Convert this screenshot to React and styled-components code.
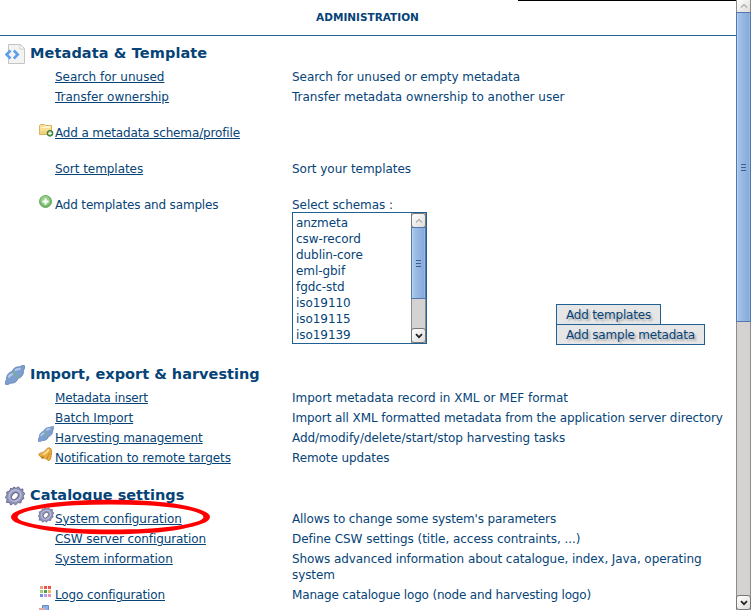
import React from "react";
import styled, { createGlobalStyle, css } from "styled-components";

const Global = createGlobalStyle`
  * { box-sizing: border-box; }
  html, body { margin: 0; padding: 0; overflow: hidden; background: #fff; }
`;

const Page = styled.div`
  display: flex;
  width: 752px;
  height: 610px;
  overflow: hidden;
  position: relative;
  color: #064377;
  font: 12px/16px "DejaVu Sans", sans-serif;
`;

const Content = styled.main`
  width: 736px;
  height: 610px;
  overflow: hidden;
`;

const TopEdge = styled.div`
  height: 1px;
  margin-left: 518px;
  background: #000;
`;

const Header = styled.header`
  height: 35px;
  padding: 8px 1px 0 0;
  border-bottom: 1px solid #1f6095;
  text-align: center;
  font-size: 10.5px;
  font-weight: bold;
`;

const Title = styled.span`
  display: inline-block;
  white-space: nowrap;
  letter-spacing: ${(p) => p.$ls || 0}px;
`;

const Section = styled.section`
  margin-top: ${(p) => p.$top}px;
`;

const Heading = styled.h2`
  display: flex;
  align-items: center;
  gap: 5px;
  height: 22px;
  margin: 0 0 3px;
  padding-left: 5px;
  font-size: 14.5px;
  line-height: 20px;
  svg { flex: none; width: 20px; height: 20px; margin-top: 2px; }
`;

const Row = styled.div`
  display: grid;
  grid-template-columns: 38px 17px 237px 444px;
  min-height: 20px;
  margin-bottom: ${(p) => p.$gap || 0}px;
  padding-top: 2px;
`;

const IconCell = styled.span`
  height: 16px;
  margin-top: ${(p) => p.$top ?? -3}px;
  svg { display: block; width: 16px; height: 16px; }
`;

const Text = styled.span`
  white-space: nowrap;
  letter-spacing: ${(p) => p.$ls || 0}px;
`;

const Link = styled(Text).attrs({ as: "a" })`
  text-decoration: underline;
  text-decoration-thickness: 1px;
  text-underline-offset: 1px;
`;

const SchemaPicker = styled.div`
  display: grid;
  grid-template-columns: 264px auto;
  margin-top: -1px;
`;

const ListBox = styled.div`
  display: flex;
  justify-content: space-between;
  width: 135px;
  height: 132px;
  border: 1px solid #1f6095;
`;

const Options = styled.ul`
  list-style: none;
  margin: 0;
  padding: 2px 0 0 3px;
`;

const Buttons = styled.div`
  display: flex;
  flex-direction: column;
  align-items: flex-start;
  justify-content: flex-end;
  margin-bottom: -1px;
`;

const Button = styled.button`
  height: 21px;
  width: ${(p) => p.$w}px;
  padding: 2px 0 0;
  & + & { margin-top: -1px; }
  border: 1px solid #1f6095;
  background: #e6e6e6;
  color: #064377;
  font: 12px/17px "DejaVu Sans", sans-serif;
  letter-spacing: -0.2px;
  text-shadow: 2px 2px 2px #aaa;
  white-space: nowrap;
`;

const Track = styled.div`
  display: flex;
  flex-direction: column;
  width: ${(p) => p.$w}px;
  height: ${(p) => p.$h}px;
  background: #d5d3d1;
  border-left: 1px solid #8e8c8a;
  border-right: 1px solid #8e8c8a;
`;

const Arrow = styled.div`
  display: grid;
  flex: none;
  place-items: center;
  height: ${(p) => p.$h}px;
  background: linear-gradient(135deg, #fff, #dedcda);
  ${(p) =>
    p.$boxed &&
    css`
      margin: 0 -1px;
      border: 1px solid #777;
      border-radius: 3px;
    `}
  ${(p) => p.$down && css`margin-top: auto;`}
`;

const Thumb = styled.div`
  display: grid;
  flex: none;
  place-items: center;
  height: ${(p) => p.$h}px;
  margin: ${(p) => p.$up || 0}px -1px 0;
  border: 1px solid #5078ae;
  box-shadow: inset 1px 0 #b9d2f1, inset -1px 0 #9bb8e2;
  background: linear-gradient(90deg, #a9c6ea, #94b6e1 48%, #84a8d9);
`;

const Annotation = styled.svg`
  position: absolute;
  left: 8px;
  top: 496px;
`;

const Chevron = ({ down }) => (
  <svg width="8" height="6" viewBox="0 0 8 6" fill="none">
    <path
      d={down ? "M1 1.2L4 4.2L7 1.2" : "M1 4.5L4 1.5L7 4.5"}
      stroke={down ? "#222" : "#aaa"}
      strokeWidth={down ? 1.7 : 1.1}
    />
  </svg>
);

const Grip = () => (
  <svg width="5" height="7" viewBox="0 0 5 7" fill="#3b5f93">
    <path d="M0 0h5v1H0zM0 3h5v1H0zM0 6h5v1H0z" />
  </svg>
);

const CodePageIcon = () => (
  <svg viewBox="0 0 20 20" fill="none">
    <path d="M3.500 .5H15.500L19.500 4.500V19.500H3.500Z" fill="#f3f3f3" stroke="#c4c4c4" />
    <path d="M15 1v4H19" fill="#fff" stroke="#cfcfcf" />
    <path d="M5.500 6.500L1.500 10.500L5.500 14.500M8.800 6.500L12.800 10.500L8.800 14.500" stroke="#5b9fe8" strokeWidth="2.500" />
  </svg>
);

const FolderAddIcon = () => (
  <svg viewBox="0 0 16 16">
    <path d="M1.500 2.500L2.500 1.500H6.500L7.500 2.500H13.500V11.500H1.500Z" fill="#f8df94" stroke="#dcb35c" />
    <path d="M3 4.500h9M6 3.500h6" stroke="#fff5cf" />
    <path d="M2 8h8v3H2z" fill="#f2d182" />
    <circle cx="12" cy="10.300" r="2.900" fill="#5da44c" stroke="#39772e" />
    <path d="M10.200 10.300h3.600M12 8.500v3.600" stroke="#fff" strokeWidth="1.200" />
  </svg>
);

const AddIcon = () => (
  <svg viewBox="0 0 16 16">
    <circle cx="7.500" cy="7.500" r="6" fill="#71b765" stroke="#6aa861" />
    <circle cx="7.300" cy="6.800" r="4.700" fill="#97cf8b" />
    <path d="M4.500 7.500h6M7.500 4.500v6" stroke="#fff" strokeWidth="2" />
  </svg>
);

const PlugIcon = () => (
  <svg viewBox="0 0 20 20">
    <path d="M.6 19.400C-.2 17 .5 15.500 1.600 14.500C1.200 10.500 3.500 7.500 7 6.600C8 3.500 11 1.500 14.800 1.800C16 .8 17.800 .2 19.400 .6C20 2.500 19.500 4.300 18.400 5.500C18.800 9.500 16.500 12.500 13.200 13.300C12 16.800 9 18.500 5.300 18.200C4 19.200 2.300 19.900 .6 19.400Z" fill="#7d9fd0" stroke="#5a7cb0" strokeWidth=".8" />
    <path d="M3.500 12.500Q5 9.500 8 9M10 5.500Q12.500 3.500 15.500 4" fill="none" stroke="#b3c9e9" strokeWidth="2.200" />
    <path d="M8.500 7L13 13" fill="none" stroke="#7db867" strokeWidth="1.200" />
  </svg>
);

const BellIcon = () => (
  <svg viewBox="0 0 16 16">
    <path d="M11.500 .8C14 1.500 13.800 5 13.300 8.300Q13 12.700 11 13.700C9.500 13 8.500 11.800 6.500 11.300C4.500 10.700 1 9.500 .8 7.500C.9 6 3.500 6 5.800 4.900C8 3.600 8.500 .5 11.500 .8Z" fill="#e9ad3f" stroke="#c08324" strokeWidth=".8" />
    <path d="M5 7.500Q9 6 10.800 2.500" fill="none" stroke="#ffe39b" strokeWidth="1.700" />
    <path d="M9 12Q10 8 12 6" fill="none" stroke="#c7841f" />
    <circle cx="4.500" cy="10.500" r="1.300" fill="#b87920" />
  </svg>
);

const GearIcon = () => (
  <svg viewBox="0 0 20 20">
    <path d="M8.500 1L11 2.300L13.500 .8L15 3.300L18 3L17.700 6L20 7.500L18 10L19 12.500L16.500 14L15.800 17L13 16.500L10.500 19L8.500 17.300L5.500 19L4.500 16.500L1.500 16.500L2 13.500L.3 11.500L2 9L1.700 6L4.700 5L5.500 2.300L8 3Z" fill="#8f94b8" stroke="#62668a" strokeWidth=".9" />
    <ellipse cx="10.200" cy="9.700" rx="6" ry="5.300" fill="none" stroke="#b7bbd6" strokeWidth="1.600" transform="rotate(-30 10 10)" />
    <ellipse cx="9.800" cy="10" rx="4" ry="2.800" fill="#fff" stroke="#666a8c" strokeWidth="1.100" transform="rotate(-50 10 10)" />
  </svg>
);

const PaletteIcon = () => (
  <svg viewBox="0 0 16 16">
    {["#f0a080", "#ee5145", "#e9554a", "#a6cf7c", "#4f9f50", "#f0b55e", "#6d8fdd", "#c29be0", "#e690bd"].map((c, i) => (
      <rect key={i} x={2 + (i % 3) * 4} y={1 + Math.floor(i / 3) * 4} width="3" height="3" fill={c} />
    ))}
  </svg>
);

const WindowsIcon = () => (
  <svg viewBox="0 0 16 16">
    <path d="M4.500 1.500h6v7h-6z" fill="#8bb1e4" stroke="#5e8ccc" />
    <path d="M1 4h6v8h-6z" fill="#e0a8a8" />
  </svg>
);

const Item = ({ icon, iconTop, label, ls, desc, dls, gap, plain }) => (
  <Row $gap={gap}>
    <i />
    <IconCell $top={iconTop}>{icon}</IconCell>
    {plain ? <Text $ls={ls}>{label}</Text> : <div><Link $ls={ls}>{label}</Link></div>}
    <Text $ls={dls}>{desc}</Text>
  </Row>
);

const schemas = ["anzmeta", "csw-record", "dublin-core", "eml-gbif", "fgdc-std", "iso19110", "iso19115", "iso19139"];

export default function App() {
  return (
    <Page>
      <Global />
      <Content>
        <TopEdge />
        <Header><Title>ADMINISTRATION</Title></Header>
        <Section $top={6}>
          <Heading><CodePageIcon /><Title $ls={0.1}>Metadata &amp; Template</Title></Heading>
          <Item label="Search for unused" desc="Search for unused or empty metadata" dls={-0.05} />
          <Item label="Transfer ownership" desc="Transfer metadata ownership to another user" gap={16} />
          <Item icon={<FolderAddIcon />} iconTop={-2} label="Add a metadata schema/profile" ls={-0.14} gap={16} />
          <Item label="Sort templates" ls={-0.05} desc="Sort your templates" dls={-0.03} gap={16} />
          <Item
            plain
            icon={<AddIcon />}
            label="Add templates and samples"
            ls={-0.17}
            dls={-0.06}
            desc={
              <>
                Select schemas :
                <SchemaPicker>
                  <ListBox>
                    <Options>{schemas.map((s) => <li key={s}>{s}</li>)}</Options>
                    <Track $w={15} $h={130}>
                      <Arrow $h={15} $boxed><Chevron /></Arrow>
                      <Thumb $h={72} $up={-1}><Grip /></Thumb>
                      <Arrow $h={15} $boxed $down><Chevron down /></Arrow>
                    </Track>
                  </ListBox>
                  <Buttons>
                    <Button $w={105}>Add templates</Button>
                    <Button $w={149}>Add sample metadata</Button>
                  </Buttons>
                </SchemaPicker>
              </>
            }
          />
        </Section>
        <Section $top={19}>
          <Heading><PlugIcon /><Title>Import, export &amp; harvesting</Title></Heading>
          <Item label="Metadata insert" ls={-0.13} desc="Import metadata record in XML or MEF format" dls={-0.01} />
          <Item label="Batch Import" desc="Import all XML formatted metadata from the application server directory" dls={-0.085} />
          <Item icon={<PlugIcon />} iconTop={-4} label="Harvesting management" ls={-0.09} desc="Add/modify/delete/start/stop harvesting tasks" dls={-0.045} />
          <Item icon={<BellIcon />} label="Notification to remote targets" ls={-0.08} desc="Remote updates" dls={-0.09} />
        </Section>
        <Section $top={16}>
          <Heading><GearIcon /><Title>Catalogue settings</Title></Heading>
          <Item icon={<GearIcon />} iconTop={-4} label="System configuration" ls={-0.07} desc="Allows to change some system's parameters" dls={-0.115} />
          <Item label="CSW server configuration" ls={-0.09} desc="Define CSW settings (title, access contraints, ...)" dls={-0.04} />
          <Item label="System information" desc={<>Shows advanced information about catalogue, index, Java, operating<br />system</>} dls={-0.077} gap={2} />
          <Item icon={<PaletteIcon />} iconTop={-2} label="Logo configuration" ls={-0.12} desc="Manage catalogue logo (node and harvesting logo)" dls={-0.165} />
          <Item icon={<WindowsIcon />} />
        </Section>
      </Content>
      <Track $w={15} $h={610}>
        <Arrow $h={12}><Chevron /></Arrow>
        <Thumb $h={310}><Grip /></Thumb>
        <Arrow $h={15} $boxed $down><Chevron down /></Arrow>
      </Track>
      <Annotation width="206" height="42" viewBox="0 0 206 42">
        <path
          fill="#f00"
          fillRule="evenodd"
          d="M3 21a99.500 17.300 0 1 0 199 0a99.500 17.300 0 1 0 -199 0ZM9.500 21a93 12.600 0 1 1 186 0a93 12.600 0 1 1 -186 0Z"
        />
      </Annotation>
    </Page>
  );
}
